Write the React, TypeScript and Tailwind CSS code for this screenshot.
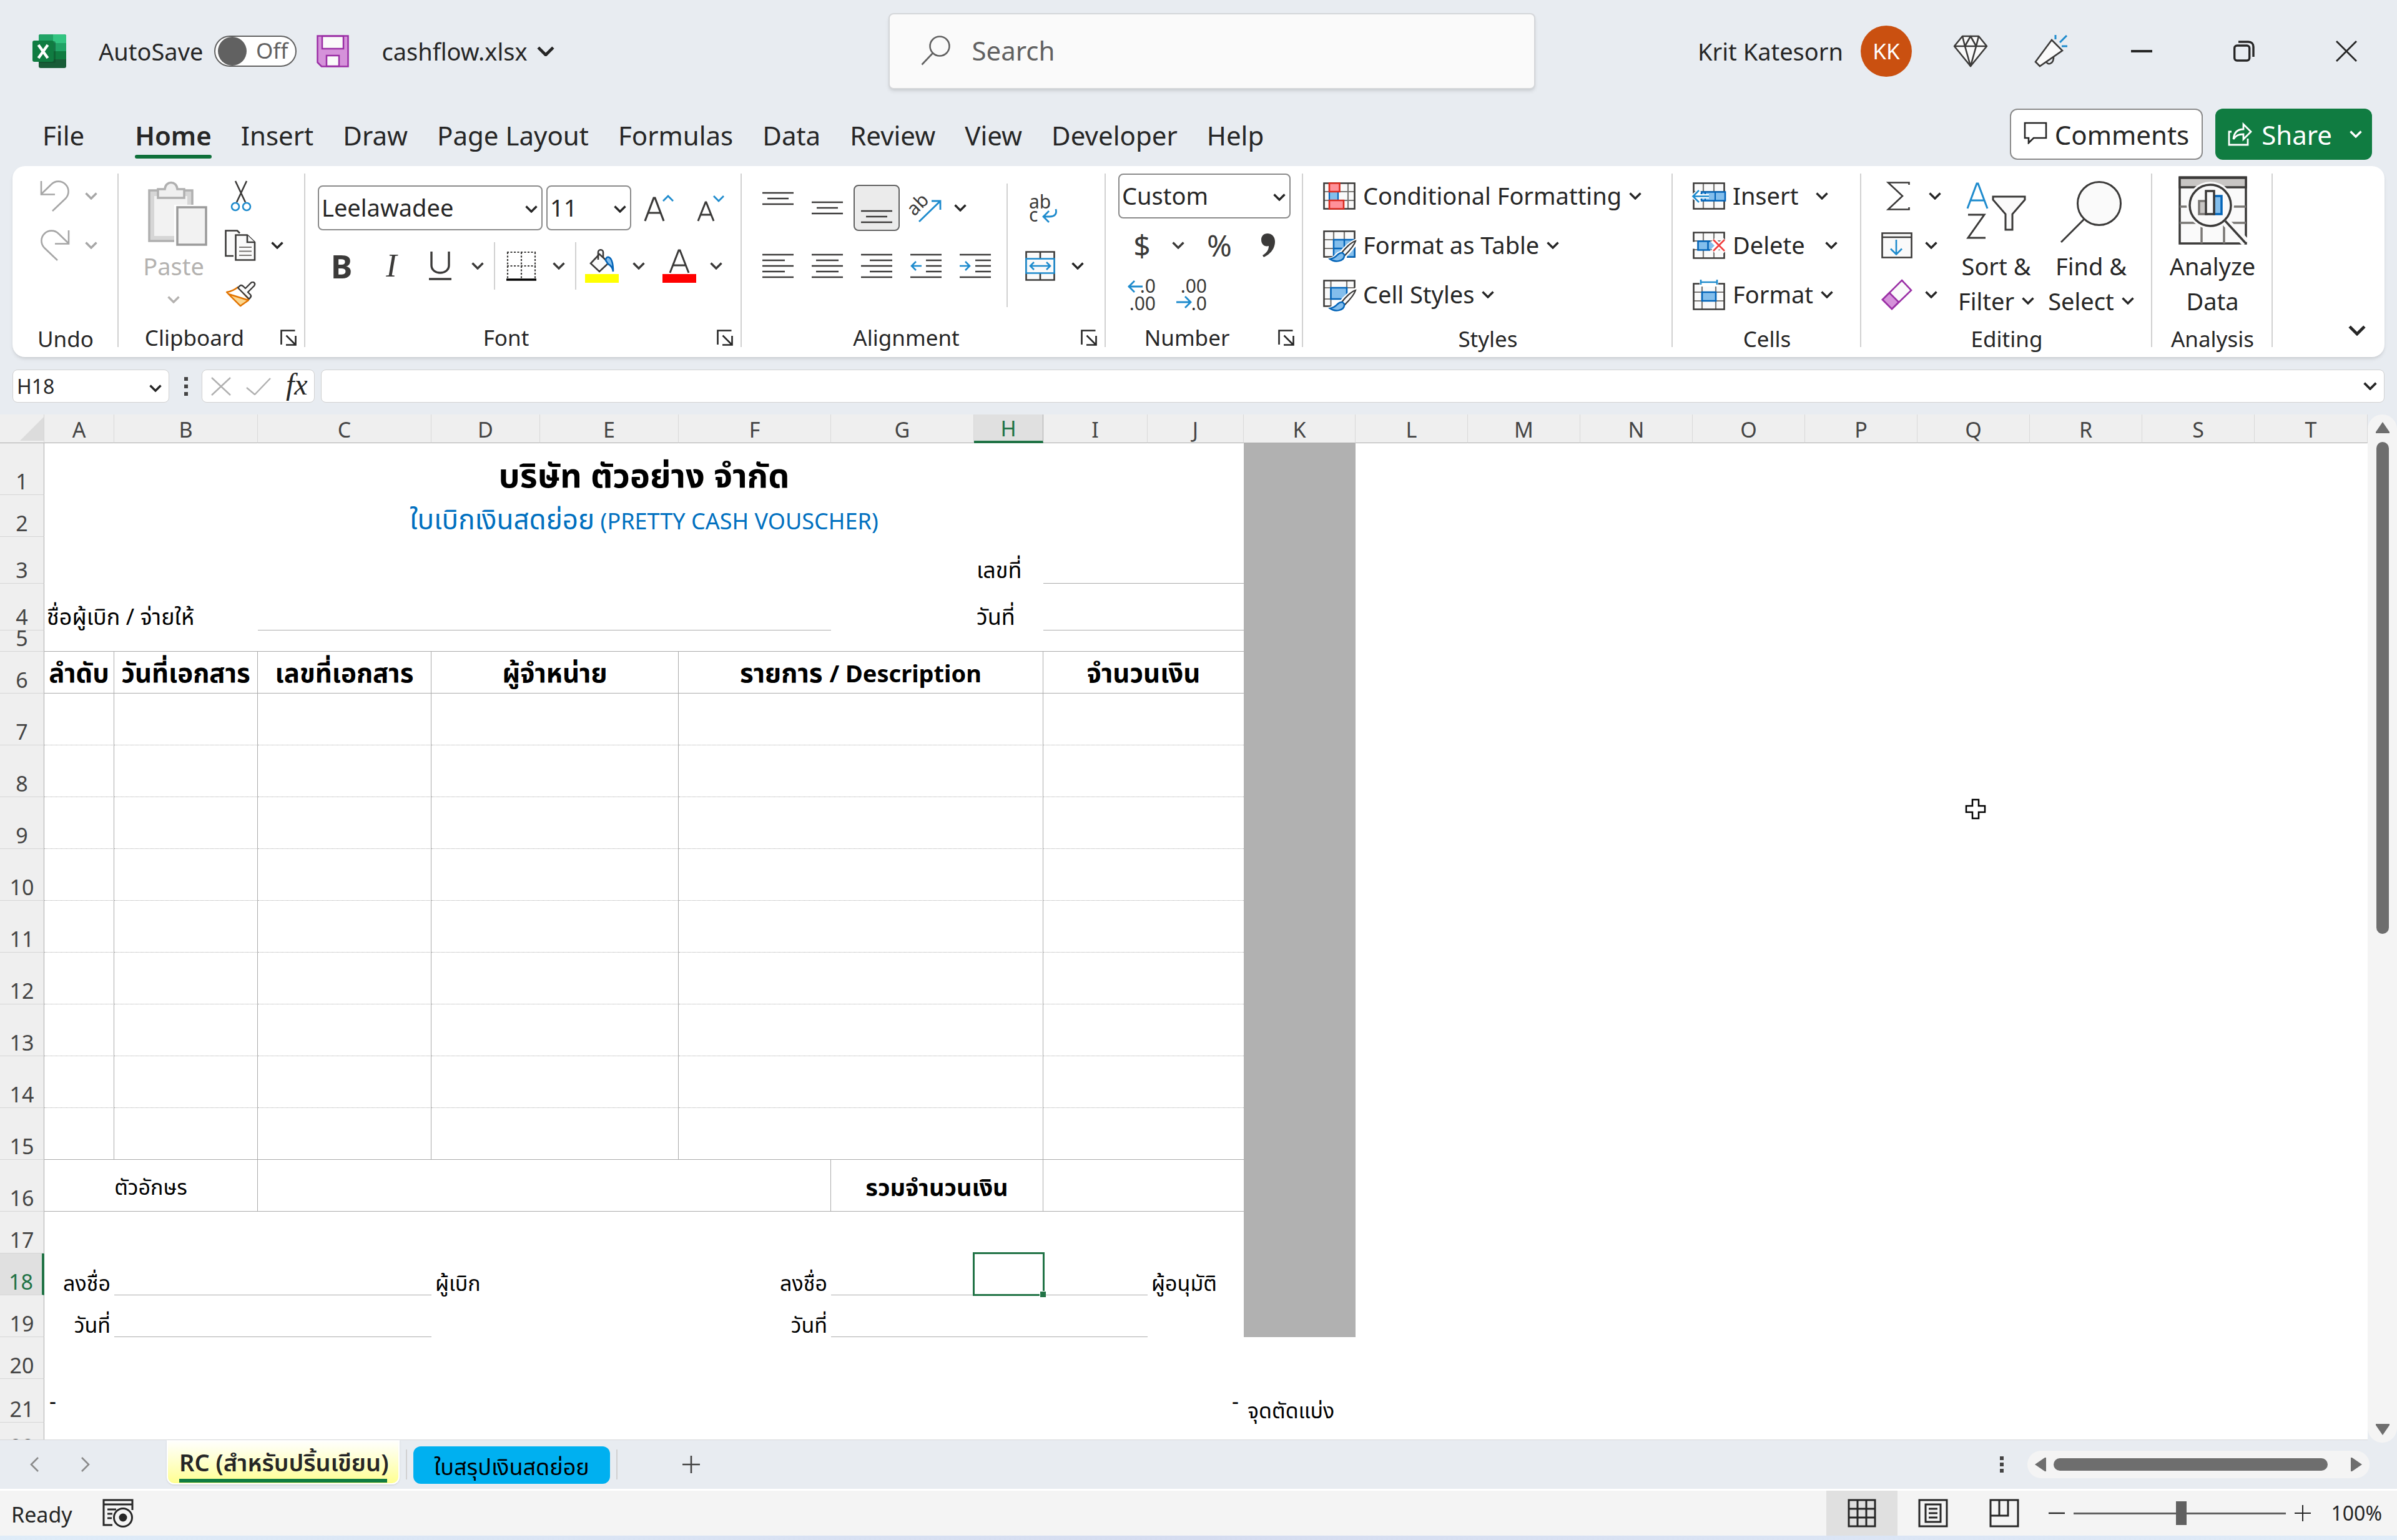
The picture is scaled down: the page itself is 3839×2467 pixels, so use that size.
import type { ReactNode } from 'react'

const Chevron = ({ className = 'w-5' }: { className?: string }) => (
    <svg viewBox="0 0 20 12" className={`shrink-0 ${className}`} fill="none" stroke="currentColor" strokeWidth="3.4">
        <path d="M1.5 1.5 10 10l8.500-8.500" />
    </svg>
)

const Launcher = () => (
    <button aria-label="More settings" className="mr-3.5 ml-4">
        <svg viewBox="0 0 26 26" className="w-6.5" fill="none" stroke="#262626" strokeWidth="2.600">
            <path d="M1.500 24V1.500h22M9.500 9.500l15 15M24.500 10v14.500H9" />
        </svg>
    </button>
)

function Group({ label, launcher, width, children }: { label: string, launcher?: boolean, width: string, children: ReactNode }) {
    return (
        <section className={`relative flex shrink-0 flex-col ${width}`}>
            <div className="h-[245px]">{children}</div>
            <div className="flex h-[60px] items-center text-[35px]">
                <div className={`flex-1 text-center ${launcher ? '' : 'pt-1'}`}>{label}</div>
                {launcher && <Launcher />}
            </div>
            <div className="absolute top-3 right-0 bottom-4 w-0.5 bg-[#d1d1d1]" />
        </section>
    )
}

const tabs = ['Insert', 'Draw', 'Page Layout', 'Formulas', 'Data', 'Review', 'View', 'Developer', 'Help']

function TitleBar() {
    return (
        <header className="flex h-41 items-center pr-2.5">
            <div className="flex flex-1 items-center pl-13">
                <svg viewBox="0 0 54 54" className="w-13.5">
                    <rect x="10" width="44" height="54" rx="3" fill="#185c37" />
                    <path d="M13 0h20v14H10V3a3 3 0 0 1 3-3z" fill="#21a366" />
                    <path d="M33 0h18a3 3 0 0 1 3 3v11H33z" fill="#33c481" />
                    <path d="M10 14h23v13H10z" fill="#107c41" />
                    <path d="M33 14h21v13H33z" fill="#21a366" />
                    <path d="M33 27h21v13H33z" fill="#107c41" />
                    <path d="M10 11h24a3 3 0 0 1 3 3v29a3 3 0 0 1-3 3H10z" fill="#0b4a28" opacity=".5" />
                    <rect y="10" width="34" height="34" rx="3" fill="#107c41" />
                    <path d="m9.500 17 7.500 10.500L24.500 17M9.500 38l7.500-10.500L24.500 38" fill="none" stroke="#fff" strokeWidth="4.500" />
                </svg>
                <label htmlFor="autosave" className="ml-13 text-[38px]">AutoSave</label>
                <div className="relative ml-4.5 h-12.5 w-33">
                    <input id="autosave" type="checkbox" className="h-12.5 w-33 appearance-none rounded-full border-2 border-[#616161] bg-white" />
                    <div className="pointer-events-none absolute top-0.5 left-1.5 size-11.5 rounded-full bg-[#616161]" />
                    <div className="pointer-events-none absolute top-0 right-3.5 text-[35px] leading-12 text-[#616161]">Off</div>
                </div>
                <button aria-label="Save" className="ml-8">
                    <svg viewBox="0 0 52 52" className="w-13" stroke="#9a2fa5" strokeWidth="2.500">
                        <path d="M1.500 1.500h49v49H8l-6.500-6.500z" fill="#d592da" />
                        <path d="M9 2h34v20H9zM16 50V33h20v17z" fill="#fafafa" />
                    </svg>
                </button>
                <button className="ml-13 flex items-center gap-4 text-[38px]">cashflow.xlsx <Chevron className="w-7" /></button>
            </div>
            <div className="relative h-[122px] w-[1036px]">
                <svg viewBox="0 0 48 48" className="absolute top-9 left-13 w-12" fill="none" stroke="#616161" strokeWidth="2.600">
                    <circle cx="30" cy="17" r="15.500" />
                    <path d="M19 28 1.500 46.500" />
                </svg>
                <input aria-label="Search" placeholder="Search" className="h-full w-full rounded-lg border-2 border-[#d4d6d9] bg-[#fafafa] pb-1 pl-33 text-[42px] shadow-md placeholder:text-[#616161]" />
            </div>
            <div className="flex flex-1 items-center justify-end">
                <div className="text-[38px]">Krit Katesorn</div>
                <div className="ml-7 flex size-20.5 items-center justify-center rounded-full bg-[#ca5010] text-[35px] text-white">KK</div>
                <button aria-label="Premium" className="ml-16.5">
                    <svg viewBox="0 0 56 52" className="w-14" fill="#fafafa" stroke="#3b3a39" strokeWidth="2.600" strokeLinejoin="round">
                        <path d="M15 2h26l13 16-26 32L2 18z" />
                        <path d="M2 18h52M15 2l4 16 9 32 9-32 4-16M19 18l9-16 9 16" fill="none" />
                    </svg>
                </button>
                <button aria-label="What's new" className="ml-18.5">
                    <svg viewBox="0 0 54 52" className="w-13.5" fill="none" stroke="#3b3a39" strokeWidth="2.600">
                        <path d="M18 40c2 10 14 8 13-7" />
                        <path d="m28 8 17 17L9 50l-7-7z" fill="#fafafa" />
                        <path d="M34 0v7M52 1 41 12M44 18h9" stroke="#1e8bcd" strokeWidth="3" />
                    </svg>
                </button>
                <button aria-label="Minimize" className="flex w-[147px] justify-end"><span className="mr-3 h-1 w-8.5 bg-[#262626]" /></button>
                <button aria-label="Restore" className="flex w-38 justify-end">
                    <svg viewBox="0 0 34 34" className="w-8.5" fill="none" stroke="#262626" strokeWidth="3.400">
                        <rect x="1.700" y="8" width="24" height="24" rx="4" />
                        <path d="M8 2h16c5 0 8 3 8 8v16" />
                    </svg>
                </button>
                <button aria-label="Close" className="mr-13.5 flex w-41 justify-end">
                    <svg viewBox="0 0 34 34" className="w-8.5" stroke="#262626" strokeWidth="2.800"><path d="m1 1 32 32M33 1 1 33" /></svg>
                </button>
            </div>
        </header>
    )
}

function TabRow() {
    return (
        <nav className="flex h-[102px] items-start pt-2.5 pr-10 pl-17 text-[42px]">
            <div className="flex h-20.5 flex-1 items-center gap-[47px] pt-0.5">
                <button className="mr-8.5">File</button>
                <button className="relative font-semibold">
                    Home
                    <span className="absolute -bottom-1.5 left-0 h-1.5 w-full rounded-full bg-[#0f703b]" />
                </button>
                {tabs.map(t => <button key={t}>{t}</button>)}
            </div>
            <button className="flex h-20.5 items-center rounded-xl border-2 border-[#8a8a8a] bg-white px-5">
                <svg viewBox="0 0 38 36" className="mr-3 -mt-1 w-9.5" fill="none" stroke="#262626" strokeWidth="2.600"><path d="M2 2h34v24H16l-8 8v-8H2z" /></svg>
                Comments
            </button>
            <button className="ml-5 flex h-20.5 items-center rounded-xl bg-[#107c41] px-4 text-white">
                <svg viewBox="0 0 40 38" className="mr-3.5 ml-1 w-10" fill="none" stroke="#fff" strokeWidth="2.800">
                    <path d="M6 15H2v21h30V26M9 27c1-11 7-16 16-16V3l12 12-12 12v-8c-8 0-12 2-16 8z" />
                </svg>
                Share
                <Chevron className="ml-7 w-5" />
            </button>
        </nav>
    )
}

function Lines({ rows, className = '' }: { rows: number[][], className?: string }) {
    return (
        <svg viewBox="0 0 50 40" className={`w-12.5 ${className}`} stroke="#3b3a39" strokeWidth="2.600">
            {rows.map(([x, w], i) => <path key={i} d={`M${x} ${i * 9 + 2}h${w}`} />)}
        </svg>
    )
}

const Grid = ({ d = 'M1 15h50M1 29h50M17 1v42M34 1v42' }: { d?: string }) => (
    <>
        <path d="M1.500 1.500h49v41h-49z" fill="#fafafa" />
        <path d={d} stroke="#797774" strokeWidth="2.200" />
        <path d="M1.500 1.500h49v41h-49z" stroke="#3b3a39" strokeWidth="2.600" />
    </>
)

const Brush = () => (
    <>
        <path d="M53 17c-8 3-19 13-24 20-9 0-5 8-18 10 8 6 24 3 24-7 6-6 15-15 18-23z" fill="#fff" stroke="#fff" strokeWidth="7" />
        <path d="M52 17c-7 2-17 12-22 19l5 4c6-6 15-16 17-23z" fill="#fafafa" stroke="#3b3a39" strokeWidth="2.200" />
        <path d="M31 36c-9-1-7 8-20 10 8 6 24 4 23-7z" fill="#83beec" stroke="#0364b8" strokeWidth="2.400" />
    </>
)

function Combo({ label, options, width }: { label: string, options: string[], width: string }) {
    return (
        <div className={`relative ${width}`}>
            <select aria-label={label} className="h-18 w-full appearance-none rounded-lg border-2 border-[#8a8a8a] bg-white pl-1 text-[38px]">
                {options.map(o => <option key={o}>{o}</option>)}
            </select>
            <Chevron className="pointer-events-none absolute top-8 right-2 w-5" />
        </div>
    )
}

function Ribbon() {
    return (
        <div className="mx-5 flex h-[306px] rounded-[20px] bg-white shadow-md">
            <Group label="Undo" width="w-[170px]">
                <div className="pt-2 pl-11 text-[#a6a6a6]">
                    <button aria-label="Undo" className="flex h-[79px] items-center gap-6">
                        <svg viewBox="0 0 48 50" className="w-12" fill="none" stroke="currentColor" strokeWidth="2.600"><path d="M2 1v21.500h22M2 22 18 6.500a16 16 0 0 1 23 22.500L20 49" /></svg>
                        <Chevron />
                    </button>
                    <button aria-label="Redo" className="flex h-[79px] items-center gap-6">
                        <svg viewBox="0 0 48 50" className="w-12" fill="none" stroke="currentColor" strokeWidth="2.600"><path d="M46 1v21.500H24M46 22 30 6.500A16 16 0 0 0 7 29l21 20" /></svg>
                        <Chevron />
                    </button>
                </div>
            </Group>

            <Group label="Clipboard" width="w-[299px]" launcher>
                <div className="flex">
                    <button className="mt-6 ml-8.5 flex w-[108px] flex-col items-center text-[38px] text-[#b4b2b0]">
                        <svg viewBox="0 0 96 104" className="ml-3 w-24" strokeWidth="3.500">
                            <path d="M3 15h69v81H3z" fill="#d6d6d6" stroke="#b0b0b0" />
                            <path d="M11 24h53v64H11z" fill="#f2f2f2" />
                            <path d="M17 27V13h11c1-14 19-14 20 0h11v14z" fill="#f0f0f0" stroke="#b0b0b0" />
                            <path d="M43 38h52v64H43z" fill="#fff" />
                            <path d="M48 42h46v60H48z" fill="#f2f2f2" stroke="#9a9a9a" />
                        </svg>
                        <span className="leading-16">Paste</span>
                        <Chevron className="mt-4 w-5" />
                    </button>
                    <div className="ml-7 pt-2">
                        <button aria-label="Cut" className="flex h-[79px] w-13 items-center justify-center">
                            <svg viewBox="0 0 34 50" className="w-8.5" fill="none" strokeWidth="2.600">
                                <path d="m8 1 16 34M26 1 10 35" stroke="#3b3a39" />
                                <circle cx="8" cy="42" r="6" stroke="#1e8bcd" />
                                <circle cx="26" cy="42" r="6" stroke="#1e8bcd" />
                            </svg>
                        </button>
                        <button aria-label="Copy" className="flex h-[79px] items-center gap-6">
                            <svg viewBox="0 0 50 50" className="w-12.5" fill="#fafafa" stroke="#3b3a39" strokeWidth="2.600">
                                <path d="M14 42H1.500V1.500H20l4 4" />
                                <path d="M17.500 8.500H36L48 20v28.500H17.500z" />
                                <path d="M36 8.500V20h12" />
                                <path d="M23 28h20M23 34.500h20M23 41h20" stroke="#797774" strokeWidth="2.200" />
                            </svg>
                            <Chevron />
                        </button>
                        <button aria-label="Format Painter" className="flex h-[79px] w-13 items-center justify-center">
                            <svg viewBox="0 0 50 42" className="w-12.5" strokeWidth="2.400" strokeLinejoin="round">
                                <path d="M2 17c7-1 13-4 18-8l17 19-13 11z" fill="#fff" stroke="#e27400" />
                                <path d="m5 20 32 10-13 9z" fill="#fbd68f" stroke="#e27400" />
                                <path d="m20 10 3-3c2-2 4-1 6 1l3 3 9-9c4-3 8 1 5 5l-10 10 4 4c2 2 1 4-2 7z" fill="#fafafa" stroke="#3b3a39" />
                            </svg>
                        </button>
                    </div>
                </div>
            </Group>

            <Group label="Font" width="w-[699px]" launcher>
                <div className="pt-5 pl-5">
                    <div className="flex h-[93px] items-center">
                        <Combo label="Font name" options={['Leelawadee']} width="w-[360px]" />
                        <Combo label="Font size" options={['11']} width="ml-1.5 w-[136px]" />
                        <button aria-label="Increase font size" className="ml-5">
                            <svg viewBox="0 0 50 44" className="w-12.5" fill="none" stroke="#3b3a39" strokeWidth="3.200">
                                <path d="M2 43 16 6h2l14 37M7 30h20" />
                                <path d="m31 11 8-8 8 8" stroke="#1e8bcd" strokeWidth="2.800" />
                            </svg>
                        </button>
                        <button aria-label="Decrease font size" className="ml-8">
                            <svg viewBox="0 0 50 44" className="w-12.5" fill="none" stroke="#3b3a39" strokeWidth="3">
                                <path d="m5 43 12-30h1l12 30M9 33h17" />
                                <path d="m30 3 8 8 8-8" stroke="#1e8bcd" strokeWidth="2.800" />
                            </svg>
                        </button>
                    </div>
                    <div className="flex h-[93px] items-center pl-2 text-[52px] text-[#3b3a39]">
                        <button className="w-15 text-center font-bold">B</button>
                        <button className="ml-5 w-15 text-center font-[Liberation_Serif] italic">I</button>
                        <button aria-label="Underline" className="ml-6 w-12">
                            <svg viewBox="0 0 36 46" className="mx-auto w-9" fill="none" stroke="#3b3a39" strokeWidth="3.400">
                                <path d="M4 0v22c0 16 28 16 28 0V0M0 44h36" />
                            </svg>
                        </button>
                        <Chevron className="ml-6.5 w-5" />
                        <div className="ml-4 h-19 w-0.5 bg-[#d1d1d1]" />
                        <button aria-label="Borders" className="ml-4.5">
                            <svg viewBox="0 0 48 48" className="w-12" fill="none" stroke="#3b3a39" strokeWidth="2.200">
                                <path d="M1 2h46M1 24h46M2 2v42M24 2v42M46 2v42" strokeDasharray="3 2.500" />
                                <path d="M0 46h48" stroke="#000" strokeWidth="3.600" />
                            </svg>
                        </button>
                        <Chevron className="ml-6.5 w-5" />
                        <div className="ml-4 h-19 w-0.5 bg-[#d1d1d1]" />
                        <button aria-label="Fill color" className="ml-3.5">
                            <svg viewBox="0 0 54 54" className="w-13.5" strokeWidth="2.600">
                                <path d="M0 40h54v14H0z" fill="#ff0" />
                                <path d="m9 23 14-15 15 14-15 14z" fill="#fafafa" stroke="#3b3a39" />
                                <path d="M33 18c0-8 12-10 12 18-1-7-4-10-8-12z" fill="#83beec" stroke="#0364b8" />
                                <path d="M21 17V5c0-5 8-5 8 0v9" fill="none" stroke="#3b3a39" />
                            </svg>
                        </button>
                        <Chevron className="ml-5.5 w-5" />
                        <button aria-label="Font color" className="ml-7">
                            <svg viewBox="0 0 54 54" className="w-13.5" fill="none" stroke="#3b3a39" strokeWidth="3">
                                <path d="m12 38 14-36h2l14 36M17 26h20" />
                                <path d="M0 40h54v14H0z" fill="red" stroke="none" />
                            </svg>
                        </button>
                        <Chevron className="ml-5.5 w-5" />
                    </div>
                </div>
            </Group>

            <Group label="Alignment" width="w-[583px]" launcher>
                <div className="flex pt-5 pl-4.5">
                    <div className="grid w-[406px] grid-cols-[79px_79px_79px_79px_79px] grid-rows-[93px_93px] place-items-center">
                        <button aria-label="Top align"><Lines rows={[[0, 50], [8, 34], [0, 50]]} className="-mt-3" /></button>
                        <button aria-label="Middle align"><Lines rows={[[0, 50], [8, 34], [0, 50]]} className="mt-4.5" /></button>
                        <button aria-label="Bottom align" className="flex h-18.5 w-18.5 items-end justify-center rounded-lg border-2 border-[#616161] bg-[#ebebeb]"><Lines rows={[[0, 50], [8, 34], [0, 50]]} className="-mb-2" /></button>
                        <button aria-label="Orientation">
                            <svg viewBox="0 0 50 50" className="w-12.5 overflow-visible" fill="none">
                                <text x="-2" y="31" transform="rotate(-45 12 25)" fontSize="30" fill="#3b3a39">ab</text>
                                <path d="m14 47 33-32M34 14h14v14" stroke="#1e8bcd" strokeWidth="2.800" />
                            </svg>
                        </button>
                        <Chevron className="mr-12 w-5" />
                        <button aria-label="Align left"><Lines rows={[[0, 50], [0, 36], [0, 50], [0, 36], [0, 50]]} /></button>
                        <button aria-label="Center"><Lines rows={[[0, 50], [7, 36], [0, 50], [7, 36], [0, 50]]} /></button>
                        <button aria-label="Align right"><Lines rows={[[0, 50], [14, 36], [0, 50], [14, 36], [0, 50]]} /></button>
                        <button aria-label="Decrease indent">
                            <svg viewBox="0 0 50 40" className="w-12.5" fill="none" strokeWidth="2.600">
                                <path d="M0 2h50M25 11h25M25 20h25M25 29h25M0 38h50" stroke="#3b3a39" />
                                <path d="M18 20H2M9 13l-7 7 7 7" stroke="#1e8bcd" />
                            </svg>
                        </button>
                        <button aria-label="Increase indent">
                            <svg viewBox="0 0 50 40" className="w-12.5" fill="none" strokeWidth="2.600">
                                <path d="M0 2h50M25 11h25M25 20h25M25 29h25M0 38h50" stroke="#3b3a39" />
                                <path d="M0 20h16M9 13l7 7-7 7" stroke="#1e8bcd" />
                            </svg>
                        </button>
                    </div>
                    <div className="mt-2 h-[198px] w-0.5 bg-[#d1d1d1]" />
                    <div className="ml-7">
                        <button aria-label="Wrap text" className="flex h-[93px] items-center pl-1.5">
                            <svg viewBox="0 0 46 52" className="w-11.5 overflow-visible" fill="none">
                                <text x="0" y="27" fontSize="30" fill="#3b3a39">ab</text>
                                <text x="0" y="48" fontSize="30" fill="#3b3a39">c</text>
                                <path d="M43 28c2 8-2 12-10 12H23M32 31l-9 9 9 9" stroke="#1e8bcd" strokeWidth="2.800" />
                            </svg>
                        </button>
                        <button aria-label="Merge and center" className="flex h-[93px] items-center gap-6.5">
                            <svg viewBox="0 0 48 48" className="w-12" fill="#fafafa" strokeWidth="2.600">
                                <path d="M1.500 1.500h45v45h-45zM24 2v10M24 36v10" stroke="#3b3a39" />
                                <path d="M1.500 12.500h45v23h-45z" stroke="#1e8bcd" />
                                <path d="M9 24h30M14 18l-6 6 6 6M34 18l6 6-6 6" fill="none" stroke="#1e8bcd" />
                            </svg>
                            <Chevron />
                        </button>
                    </div>
                </div>
            </Group>

            <Group label="Number" width="w-[316px]" launcher>
                <div className="pt-2 pl-5">
                    <div className="flex h-[79px] items-center"><Combo label="Number format" options={['Custom']} width="w-[276px]" /></div>
                    <div className="flex h-[79px] items-center text-[48px] text-[#3b3a39]">
                        <button className="ml-5.5 w-8">$</button>
                        <Chevron className="ml-8 w-5" />
                        <button className="ml-7.5 w-13">%</button>
                        <button aria-label="Comma style" className="ml-10">
                            <svg viewBox="0 0 24 38" className="w-6" fill="#3b3a39"><path d="M11 0c8 0 12 6 12 13 0 11-7 20-18 25l-2-3c7-4 10-9 10-15C6 22 1 17 1 10 1 4 5 0 11 0z" /></svg>
                        </button>
                    </div>
                    <div className="flex h-[79px] items-center gap-7">
                        <button aria-label="Increase decimal">
                            <svg viewBox="0 0 48 52" className="ml-3.5 w-12 overflow-visible" fill="none">
                                <text x="46" y="23" textAnchor="end" fontSize="30" fill="#3b3a39">.0</text>
                                <text x="46" y="51" textAnchor="end" fontSize="30" fill="#3b3a39">.00</text>
                                <path d="M25 13H2M12 4l-9 9 9 9" stroke="#1e8bcd" strokeWidth="2.800" />
                            </svg>
                        </button>
                        <button aria-label="Decrease decimal">
                            <svg viewBox="0 0 54 52" className="w-13.5 overflow-visible" fill="none">
                                <text x="52" y="23" textAnchor="end" fontSize="30" fill="#3b3a39">.00</text>
                                <text x="52" y="51" textAnchor="end" fontSize="30" fill="#3b3a39">.0</text>
                                <path d="M3 38h23M17 29l9 9-9 9" stroke="#1e8bcd" strokeWidth="2.800" />
                            </svg>
                        </button>
                    </div>
                </div>
            </Group>

            <Group label="Styles" width="w-[592px]">
                <div className="pt-2 pl-8 text-[38px]">
                    <button className="flex h-[79px] items-center gap-3">
                        <svg viewBox="0 0 52 44" className="w-13" fill="none">
                            <Grid d="M1 15h50M1 29h50M40 1v42" />
                            <path d="M10 15h14v14H10z" fill="#83beec" stroke="#0364b8" strokeWidth="2.200" />
                            <path d="M10 1.500h16.500V15H10zM10 29h23v13.500H10z" fill="#ff9199" stroke="#d92c20" strokeWidth="2.600" />
                        </svg>
                        Conditional Formatting <Chevron />
                    </button>
                    <button className="flex h-[79px] items-center gap-3">
                        <svg viewBox="0 0 56 52" className="-mr-1 w-14 pt-1" fill="none">
                            <Grid />
                            <path d="M17 15h33.500v27.500H17z" fill="#83beec" />
                            <path d="M17 42.500V15h33.500M17 29h33M34 15v28M17 42.500h33.500V15" stroke="#0364b8" strokeWidth="2.400" />
                            <Brush />
                        </svg>
                        Format as Table <Chevron />
                    </button>
                    <button className="flex h-[79px] items-center gap-3">
                        <svg viewBox="0 0 56 52" className="-mr-1 w-14 pt-1" fill="none">
                            <path d="M1.500 1.500h49V13H38v18H12.500v11.500h-11z" fill="#fafafa" />
                            <path d="M1 13h50M1 31h11M12.500 1v42M38 1v12" stroke="#797774" strokeWidth="2.200" />
                            <path d="M12 42.500H1.500v-41h49V13" stroke="#3b3a39" strokeWidth="2.600" />
                            <path d="M12.500 13H38v18H12.500z" fill="#83beec" stroke="#0364b8" strokeWidth="2.600" />
                            <Brush />
                        </svg>
                        Cell Styles <Chevron />
                    </button>
                </div>
            </Group>

            <Group label="Cells" width="w-[302px]">
                <div className="pt-2 pl-8 text-[38px]">
                    <button className="flex h-[79px] items-center gap-3">
                        <svg viewBox="0 0 52 44" className="w-13 overflow-visible" fill="none">
                            <Grid />
                            <path d="M14 15.500h38v14H14z" fill="#83beec" stroke="#0364b8" strokeWidth="2.600" />
                            <path d="M36 15v15M20 15v15" stroke="#0364b8" strokeWidth="2.200" />
                            <path d="M26 22.500H1M11 13l-10 9.500L11 32" stroke="#fff" strokeWidth="7" />
                            <path d="M26 22.500H1M10 13l-9.500 9.500L10 32" stroke="#1e8bcd" strokeWidth="2.600" />
                        </svg>
                        Insert <Chevron className="ml-4 w-5" />
                    </button>
                    <button className="flex h-[79px] items-center gap-3">
                        <svg viewBox="0 0 52 44" className="w-13 overflow-visible" fill="none">
                            <Grid />
                            <path d="M-1 16.500h53v11H-1z" fill="#fff" />
                            <path d="M8 15.500h20l7 7-7 7H8z" fill="#83beec" />
                            <path d="M28 15.500H8.500v14H28M24.500 15v15" stroke="#0364b8" strokeWidth="2.600" />
                            <path d="m33 13 19 19M52 13 33 32" stroke="#fff" strokeWidth="8" />
                            <path d="m33 13 18 18M51 13 33 31" stroke="#f03e3e" strokeWidth="2.600" />
                        </svg>
                        Delete <Chevron className="ml-5 w-5" />
                    </button>
                    <button className="flex h-[79px] items-center gap-3">
                        <svg viewBox="0 -6 52 50" className="w-13" fill="none">
                            <Grid d="M1 15h50M1 29h50M15 1v42M37 1v42" />
                            <path d="M11-6h30V6H11z" fill="#fff" />
                            <path d="M13-1h26M13-5v8M39-5v8" stroke="#1e8bcd" strokeWidth="2.600" />
                            <path d="M15 15h22v14H15z" fill="#83beec" stroke="#0364b8" strokeWidth="2.600" />
                        </svg>
                        Format <Chevron />
                    </button>
                </div>
            </Group>

            <Group label="Editing" width="w-[466px]">
                <div className="flex text-[38px]">
                    <div className="w-[150px] pt-2 pl-8">
                        <button aria-label="AutoSum" className="flex h-[79px] items-center gap-7.5 pl-2">
                            <svg viewBox="0 0 38 46" className="w-9.5" fill="none" stroke="#3b3a39" strokeWidth="2.600"><path d="M36.500 5V1.500H3l23 21.500L3 44.500h33.500V41" /></svg>
                            <Chevron />
                        </button>
                        <button aria-label="Fill" className="flex h-[79px] items-center gap-5">
                            <svg viewBox="0 0 50 42" className="w-12.5" fill="none" strokeWidth="2.600">
                                <path d="M1.500 1.500h47v39h-47zM1 8h48" stroke="#3b3a39" fill="#fafafa" />
                                <path d="M24 12v23M15 26.500l9 9 9-9" stroke="#1e8bcd" />
                            </svg>
                            <Chevron />
                        </button>
                        <button aria-label="Clear" className="flex h-[79px] items-center gap-5">
                            <svg viewBox="0 0 50 50" className="w-12.5" fill="#fafafa" stroke="#9a2fa5" strokeWidth="2.600">
                                <path d="m33 2 15 16-31 30L2 33z" />
                                <path d="m13 22 15 15-11 11L2 33z" fill="#d592da" />
                            </svg>
                            <Chevron />
                        </button>
                    </div>
                    <button className="flex w-[132px] flex-col items-center pt-6">
                        <svg viewBox="0 0 96 100" className="h-25 w-24" fill="none" strokeWidth="3">
                            <path d="M2 44 17 4h2l15 40M7 31h22" stroke="#1e8bcd" />
                            <path d="M3 54h26L3 91h28" stroke="#3b3a39" />
                            <path d="M43 25h51v5L74 53v25H63V53L43 30z" fill="#fafafa" stroke="#3b3a39" />
                        </svg>
                        <span className="mt-2 leading-14">Sort &amp;</span>
                        <span className="flex items-center gap-3 leading-14">Filter <Chevron /></span>
                    </button>
                    <button className="ml-3.5 flex w-[144px] flex-col items-center pt-6">
                        <svg viewBox="0 0 100 100" className="h-25 w-25" fill="none" stroke="#3b3a39" strokeWidth="3">
                            <circle cx="63" cy="36" r="34.500" fill="#fafafa" />
                            <path d="M39 61 2 98" />
                        </svg>
                        <span className="mt-2 leading-14">Find &amp;</span>
                        <span className="flex items-center gap-3 leading-14">Select <Chevron /></span>
                    </button>
                </div>
            </Group>

            <Group label="Analysis" width="w-[193px]">
                <button className="flex w-full flex-col items-center pt-4 text-[38px]">
                    <svg viewBox="0 0 110 110" className="w-27.5" fill="none" stroke="#3b3a39" strokeWidth="3.500">
                        <path d="M2 2h106v106H2z" fill="#fafafa" />
                        <path d="M2 3h106v15H2z" fill="#c8c6c4" />
                        <path d="M2 49h106M2 75h106M37 75v33M73 75v33" stroke="#797774" />
                        <path d="M76 74l32 33" stroke="#fafafa" strokeWidth="14" />
                        <circle cx="51" cy="47" r="38" fill="#fafafa" stroke="none" />
                        <circle cx="51" cy="47" r="33" fill="#fafafa" />
                        <path d="m75 72 33 36" />
                        <path d="M33 40h12v21H33z" fill="#c8c6c4" stroke="#797774" />
                        <path d="M57 32h12v29H57z" fill="#83beec" stroke="#0364b8" />
                        <path d="M44 24h13v37H44z" fill="#fafafa" />
                    </svg>
                    <span className="mt-1.5 leading-14">Analyze</span>
                    <span className="leading-14">Data</span>
                </button>
            </Group>

            <div className="flex flex-1 items-end justify-end pr-7.5 pb-8.5">
                <button aria-label="Collapse ribbon"><Chevron className="w-7" /></button>
            </div>
        </div>
    )
}

function FormulaBar() {
    return (
        <div className="mx-5 mt-5 flex h-[53px] items-center">
            <div className="relative h-full w-[251px]">
                <input aria-label="Name box" defaultValue="H18" className="h-full w-full rounded-lg border border-[#d1d1d1] bg-white pl-1.5 text-[32px]" />
                <Chevron className="absolute top-6 right-3 w-5" />
            </div>
            <div className="ml-6 flex flex-col gap-1.5">
                <span className="size-1.5 bg-[#444]" /><span className="size-1.5 bg-[#444]" /><span className="size-1.5 bg-[#444]" />
            </div>
            <div className="ml-5.5 flex h-full w-[181px] items-center gap-6 rounded-lg border border-[#d1d1d1] bg-white pl-3.5">
                <svg viewBox="0 0 32 30" className="w-8" stroke="#b0b0b0" strokeWidth="2.400"><path d="m1 1 30 28M31 1 1 29" /></svg>
                <svg viewBox="0 0 40 28" className="w-10" fill="none" stroke="#b0b0b0" strokeWidth="2.400"><path d="m1 16 13 11L39 1" /></svg>
                <button className="-mt-1.5 font-[Liberation_Serif] text-[48px] leading-none text-[#262626] italic">fx</button>
            </div>
            <div className="relative ml-2.5 h-full flex-1">
                <input aria-label="Formula" className="h-full w-full rounded-lg border border-[#d1d1d1] bg-white px-3 text-[32px]" />
                <Chevron className="absolute top-5 right-3 w-5.5" />
            </div>
        </div>
    )
}

const letters = 'ABCDEFGHIJKLMNOPQRST'.split('')

function Row({ n, h, active, children }: { n: number, h: string, active?: boolean, children?: ReactNode }) {
    return (
        <tr>
            <th className={`border-r border-b border-b-[#d6d6d6] pb-[11px] align-bottom text-[34px] leading-5 font-normal ${h} ${active ? 'border-r-4 border-r-[#217346] bg-[#e0e0e0] text-[#217346]' : 'border-r-[#ababab] bg-[#efefef] text-[#444]'}`}>{n}</th>
            {children}
        </tr>
    )
}

const line = 'border-b border-[#ababab]'
const head = 'border-b border-[#ababab] text-center text-[42px] font-bold whitespace-nowrap'

function Sheet() {
    return (
        <div className="flex min-h-0 flex-1 pt-[19px]">
            <div className="flex-1 overflow-hidden border-b border-[#d6d8da] bg-white">
                <table className="w-full table-fixed border-separate border-spacing-0 text-[34px] leading-10 text-black">
                    <colgroup>
                        <col className="w-[71px]" /><col className="w-[112px]" /><col className="w-[230px]" /><col className="w-[278px]" />
                        <col className="w-[174px]" /><col className="w-[222px]" /><col className="w-[244px]" /><col className="w-[229px]" />
                        <col className="w-[111px]" /><col className="w-[167px]" /><col className="w-[154px]" /><col className="w-[179px]" />
                        <col className="w-[180px]" /><col className="w-[180px]" /><col className="w-[180px]" /><col className="w-[180px]" />
                        <col className="w-[180px]" /><col className="w-[180px]" /><col className="w-[180px]" /><col className="w-[180px]" /><col />
                    </colgroup>
                    <thead>
                        <tr className="h-[46px] bg-[#efefef] text-[#444]">
                            <th className="border-r border-b border-r-[#d6d6d6] border-b-[#ababab]">
                                <svg viewBox="0 0 40 40" className="ml-auto w-9.5"><path d="M40 0v40H0z" fill="#dcdcdc" /></svg>
                            </th>
                            {letters.map(l => (
                                <th key={l} className={`border-r border-b pt-0.5 font-normal ${l === 'H' ? 'border-b-4 border-r-[#ababab] border-b-[#217346] bg-[#e0e0e0] text-[#217346]' : 'border-r-[#d9d9d9] border-b-[#ababab]'}`}>{l}</th>
                            ))}
                        </tr>
                    </thead>
                    <tbody>
                        <Row n={1} h="h-[83px]">
                            <td colSpan={10} className="pt-4 text-center text-[54px] font-bold">บริษัท ตัวอย่าง จำกัด</td>
                            <td rowSpan={19} className="bg-[#b1b1b1]" />
                            <td colSpan={9} rowSpan={20} />
                        </Row>
                        <Row n={2} h="h-[67px]">
                            <td colSpan={10} className="pt-3 text-center text-[36px] text-[#0070c0]"><span className="text-[44px]">ใบเบิกเงินสดย่อย</span> (PRETTY CASH VOUSCHER)</td>
                        </Row>
                        <Row n={3} h="h-[75px]">
                            <td colSpan={7} />
                            <td className="pb-0.5 pl-1 align-bottom text-[36px] whitespace-nowrap">เลขที่</td>
                            <td colSpan={2} className={line} />
                        </Row>
                        <Row n={4} h="h-[75px]">
                            <td colSpan={2} className="pb-0.5 pl-1 align-bottom text-[36px]">ชื่อผู้เบิก / จ่ายให้</td>
                            <td colSpan={4} className={line} />
                            <td />
                            <td className="pb-0.5 pl-1 align-bottom text-[36px] whitespace-nowrap">วันที่</td>
                            <td colSpan={2} className={line} />
                        </Row>
                        <Row n={5} h="h-[34px]">
                            <td colSpan={10} className={line} />
                        </Row>
                        <Row n={6} h="h-[67px]">
                            <td className={`${head} border-r`}>ลำดับ</td>
                            <td className={`${head} border-r`}>วันที่เอกสาร</td>
                            <td className={`${head} border-r`}>เลขที่เอกสาร</td>
                            <td colSpan={2} className={`${head} border-r`}>ผู้จำหน่าย</td>
                            <td colSpan={3} className={`${head} border-r`}>รายการ <span className="text-[38px]">/ Description</span></td>
                            <td colSpan={2} className={head}>จำนวนเงิน</td>
                        </Row>
                        {[7, 8, 9, 10, 11, 12, 13, 14, 15].map(n => {
                            const b = n === 15 ? 'border-b border-[#ababab]' : 'border-b border-[#ababab] [border-bottom-style:dotted]'
                            return (
                                <Row key={n} n={n} h="h-[83px]">
                                    <td className={`border-r ${b}`} />
                                    <td className={`border-r ${b}`} />
                                    <td className={`border-r ${b}`} />
                                    <td colSpan={2} className={`border-r ${b}`} />
                                    <td colSpan={3} className={`border-r ${b}`} />
                                    <td colSpan={2} className={b} />
                                </Row>
                            )
                        })}
                        <Row n={16} h="h-[83px]">
                            <td colSpan={2} className={`${line} border-r pt-1 text-center`}>ตัวอักษร</td>
                            <td colSpan={4} className={`${line} border-r`} />
                            <td colSpan={2} className={`${line} border-r pt-1 text-center text-[38px] font-bold`}>รวมจำนวนเงิน</td>
                            <td colSpan={2} className={line} />
                        </Row>
                        <Row n={17} h="h-[67px]"><td colSpan={10} /></Row>
                        <Row n={18} h="h-[67px]" active>
                            <td className="pr-1.5 text-right align-bottom whitespace-nowrap">ลงชื่อ</td>
                            <td colSpan={2} className={line} />
                            <td colSpan={2} className="pl-1.5 align-bottom">ผู้เบิก</td>
                            <td className="pr-1.5 text-right align-bottom">ลงชื่อ</td>
                            <td className={line} />
                            <td className={`relative ${line}`}>
                                <div className="absolute -inset-0.5 border-3 border-[#217346]" />
                                <div className="absolute -right-1 -bottom-1 size-2.5 border-t border-l border-white bg-[#217346]" />
                            </td>
                            <td className={line} />
                            <td className="pl-1.5 align-bottom whitespace-nowrap">ผู้อนุมัติ</td>
                        </Row>
                        <Row n={19} h="h-[67px]">
                            <td className="pr-1.5 text-right align-bottom whitespace-nowrap">วันที่</td>
                            <td colSpan={2} className={line} />
                            <td colSpan={2} />
                            <td className="pr-1.5 text-right align-bottom">วันที่</td>
                            <td colSpan={3} className={line} />
                            <td />
                        </Row>
                        <Row n={20} h="h-[67px]"><td colSpan={11} /></Row>
                        <Row n={21} h="h-[70px]">
                            <td className="pl-2">-</td>
                            <td colSpan={8} />
                            <td className="pr-2 text-right">-</td>
                            <td className="pl-1.5 align-bottom whitespace-nowrap">จุดตัดแบ่ง</td>
                        </Row>
                        <Row n={22} h="h-[60px]" />
                    </tbody>
                </table>
            </div>
            <div className="-mb-1 flex w-[47px] flex-col items-center rounded-full bg-[#f4f4f4] py-3">
                <svg viewBox="0 0 22 18" className="w-5.5" fill="#6e6e6e"><path d="M11 0 22 16v2H0v-2z" /></svg>
                <div className="mt-3.5 h-[788px] w-5 rounded-full bg-[#6e6e6e]" />
                <svg viewBox="0 0 22 18" className="mt-auto w-5.5" fill="#6e6e6e"><path d="M11 18 22 2V0H0v2z" /></svg>
            </div>
        </div>
    )
}

function SheetTabs() {
    return (
        <div className="flex h-20 items-center border-b-2 border-white">
            <div className="flex w-[267px] gap-17 pl-12">
                <svg viewBox="0 0 14 24" className="w-3.5" fill="none" stroke="#8a8a8a" strokeWidth="2.600"><path d="M13 1 2 12l11 11" /></svg>
                <svg viewBox="0 0 14 24" className="w-3.5" fill="none" stroke="#8a8a8a" strokeWidth="2.600"><path d="m1 1 11 11L1 23" /></svg>
            </div>
            <button className="h-[71px] w-[373px] self-start rounded-b-xl border-2 border-t-0 border-white bg-linear-to-b from-white to-[#ffff8f] px-4.5 pt-1.5 text-[38px] leading-[54px] font-semibold whitespace-nowrap shadow">
                RC (สำหรับปริ้นเขียน)
                <span className="block h-1.5 bg-[#107c41]" />
            </button>
            <div className="mx-2.5 h-12 w-0.5 bg-[#d1d1d1]" />
            <button className="mt-0.5 h-15 w-[315px] rounded-xl bg-[#00b0f0] pt-1.5 text-[36px] leading-none whitespace-nowrap text-black">ใบสรุปเงินสดย่อย</button>
            <div className="mx-2.5 h-12 w-0.5 bg-[#d1d1d1]" />
            <button aria-label="New sheet" className="ml-23.5">
                <svg viewBox="0 0 28 28" className="w-7" stroke="#444" strokeWidth="2.600"><path d="M14 0v28M0 14h28" /></svg>
            </button>
            <div className="mr-9.5 ml-auto flex flex-col gap-1">
                <span className="size-1.5 bg-[#444]" /><span className="size-1.5 bg-[#444]" /><span className="size-1.5 bg-[#444]" />
            </div>
            <div className="mr-11 flex h-11 w-[548px] items-center rounded-full bg-[#f4f4f4] px-3">
                <svg viewBox="0 0 18 22" className="w-4.5" fill="#6e6e6e"><path d="M0 11 16 0h2v22h-2z" /></svg>
                <div className="ml-3 h-5 w-[439px] rounded-full bg-[#6e6e6e]" />
                <svg viewBox="0 0 18 22" className="ml-auto w-4.5" fill="#6e6e6e"><path d="M18 11 2 0H0v22h2z" /></svg>
            </div>
        </div>
    )
}

function StatusBar() {
    return (
        <footer className="flex h-[73px] items-center border-t border-white bg-[#f4f4f4] pl-4.5 text-[34px]">
            <span className="pt-1">Ready</span>
            <svg viewBox="0 0 50 46" className="ml-12 w-12.5" fill="none" stroke="#262626" strokeWidth="3">
                <path d="M48 18V2H2v40h14M2 9h46M8 17h14M8 24h8M8 31h7" />
                <circle cx="33" cy="30" r="14.500" />
                <circle cx="33" cy="30" r="6.500" fill="#262626" stroke="none" />
            </svg>
            <div className="ml-auto flex h-full">
                <button aria-label="Normal" className="flex w-[114px] items-center justify-center bg-[#e0e0e0]">
                    <svg viewBox="0 0 46 46" className="w-11.5" fill="none" stroke="#262626" strokeWidth="3"><path d="M2 2h42v42H2zM2 16h42M2 30h42M16 2v42M30 2v42" /></svg>
                </button>
                <button aria-label="Page layout" className="flex w-[114px] items-center justify-center">
                    <svg viewBox="0 0 48 46" className="w-12" fill="none" stroke="#262626" strokeWidth="3"><path d="M2 2h44v42H2zM12 9h24v28H12zM17 16h14M17 23h14M17 30h14" /></svg>
                </button>
                <button aria-label="Page break preview" className="flex w-[114px] items-center justify-center">
                    <svg viewBox="0 0 48 46" className="w-12" fill="none" stroke="#262626" strokeWidth="3"><path d="M2 2h44v42H2zM2 27h28V2M16 2v25" /></svg>
                </button>
            </div>
            <svg viewBox="0 0 26 26" className="ml-3.5 w-6.5" stroke="#262626" strokeWidth="2.400"><path d="M0 13h26" /></svg>
            <input type="range" aria-label="Zoom" min="10" max="190" defaultValue="101" className="mx-3.5 h-10 w-[340px] appearance-none bg-transparent bg-[linear-gradient(#616161,#616161)] bg-[length:100%_3px] bg-center bg-no-repeat [&::-webkit-slider-thumb]:h-[38px] [&::-webkit-slider-thumb]:w-[17px] [&::-webkit-slider-thumb]:appearance-none [&::-webkit-slider-thumb]:bg-[#616161]" />
            <svg viewBox="0 0 26 26" className="w-6.5" stroke="#262626" strokeWidth="2"><path d="M0 13h26M13 0v26" /></svg>
            <div className="mr-6 ml-8 text-[32px]">100%</div>
        </footer>
    )
}

export default function App() {
    return (
        <div className="relative flex h-screen flex-col overflow-hidden bg-[#e8ecf1] font-['Noto_Sans','Noto_Sans_Thai',sans-serif] text-[#262626]">
            <TitleBar />
            <TabRow />
            <Ribbon />
            <FormulaBar />
            <Sheet />
            <SheetTabs />
            <StatusBar />
            <div className="h-[7px] bg-linear-to-r from-[#dfecf8] via-[#d5dcf0] to-[#e0ecf8]" />
            <svg viewBox="0 0 34 34" className="pointer-events-none absolute top-[1279px] left-[3147px] w-8.5" fill="#fff" stroke="#000" strokeWidth="2.500">
                <path d="M12 2h10v10h10v10H22v10H12V22H2V12h10z" />
            </svg>
        </div>
    )
}
